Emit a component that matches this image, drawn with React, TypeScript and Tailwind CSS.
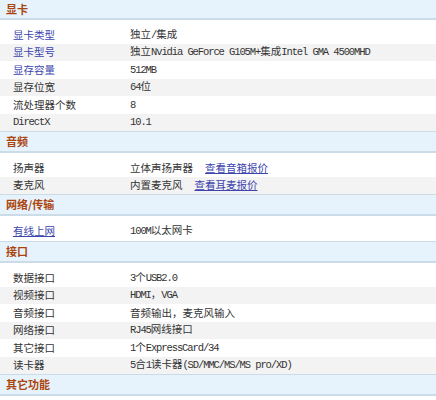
import { Fragment } from 'react';

interface SpecRow {
  label: string;
  value: string;
  link?: boolean;
  underline?: boolean;
  extra?: string;
}

interface Section {
  title: string;
  rows: SpecRow[];
  tail?: string;
}

const SECTIONS: Section[] = [
  {
    title: '显卡',
    rows: [
      { label: '显卡类型', link: true, value: '独立/集成' },
      { label: '显卡型号', link: true, value: '独立Nvidia GeForce G105M+集成Intel GMA 4500MHD' },
      { label: '显存容量', link: true, value: '512MB' },
      { label: '显存位宽', value: '64位' },
      { label: '流处理器个数', value: '8' },
      { label: 'DirectX', value: '10.1' },
    ],
  },
  {
    title: '音频',
    rows: [
      { label: '扬声器', value: '立体声扬声器', extra: '查看音箱报价' },
      { label: '麦克风', value: '内置麦克风', extra: '查看耳麦报价' },
    ],
  },
  {
    title: '网络/传输',
    rows: [{ label: '有线上网', link: true, underline: true, value: '100M以太网卡' }],
    tail: 'pb-[1.5px]',
  },
  {
    title: '接口',
    rows: [
      { label: '数据接口', value: '3个USB2.0' },
      { label: '视频接口', value: 'HDMI，VGA' },
      { label: '音频接口', value: '音频输出，麦克风输入' },
      { label: '网络接口', value: 'RJ45网线接口' },
      { label: '其它接口', value: '1个ExpressCard/34' },
      { label: '读卡器', value: '5合1读卡器(SD/MMC/MS/MS pro/XD)' },
    ],
  },
  { title: '其它功能', rows: [] },
];

const CJK = /[\u3000-\u9fff\uff00-\uffef]/;

// latin runs get a condensed mono face so they sit at half the CJK width
function Mixed({ text }: { text: string }) {
  const parts = text.split(/([\u3000-\u9fff\uff00-\uffef]+)/);
  return (
    <>
      {parts.map((p, i) =>
        p === '' ? null : CJK.test(p) ? (
          <span key={i}>{p}</span>
        ) : (
          <span key={i} className="font-['Liberation_Mono'] tracking-[-1.1px] whitespace-pre">
            {p}
          </span>
        )
      )}
    </>
  );
}

export default function App() {
  return (
    <div className="w-[436px] h-[400px] overflow-hidden bg-white font-['Noto_Sans_CJK_SC',sans-serif] text-[10.5px] text-[#333]">
      {SECTIONS.map((section, si) => (
        <Fragment key={section.title}>
          <div
            className={
              si === 0
                ? 'h-[20px] flex items-center pl-[6px] bg-[#e7f3fc] border-b-2 border-[#cbdbe7]'
                : 'h-[22px] flex items-center pl-[6px] bg-[#e7f3fc] border-t border-b-2 border-[#cbdbe7]'
            }
          >
            <span className="font-bold text-[11px] text-[#ab450f]">{section.title}</span>
          </div>
          {section.rows.length > 0 && (
            <div className={`pt-[6px] ${section.tail ?? ''}`}>
              {section.rows.map((row, ri) => (
                <div
                  key={row.label}
                  className={`h-[17.5px] flex items-center ${ri % 2 === 1 ? 'bg-[#f3f3f3]' : 'bg-white'}`}
                >
                  <div
                    className={`w-[130px] pl-[13px] ${row.link ? 'text-[#3d45ad]' : ''} ${row.underline ? 'underline' : ''}`}
                  >
                    <Mixed text={row.label} />
                  </div>
                  <div className="flex-1 whitespace-nowrap">
                    <Mixed text={row.value} />
                    {row.extra && (
                      <span className="ml-[12px] text-[#3d45ad] underline">{row.extra}</span>
                    )}
                  </div>
                </div>
              ))}
            </div>
          )}
        </Fragment>
      ))}
    </div>
  );
}
